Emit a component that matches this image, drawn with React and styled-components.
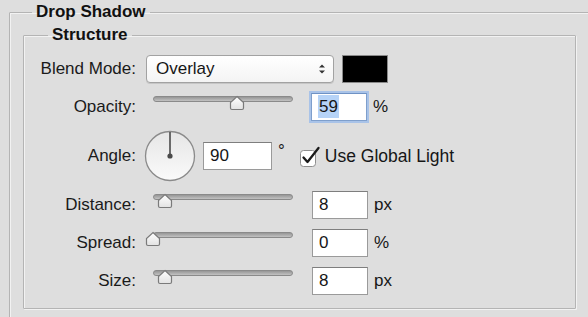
import React from 'react';
import styled, { createGlobalStyle } from 'styled-components';

const GlobalStyle = createGlobalStyle`
  html, body {
    margin: 0;
    padding: 0;
    background: #dedede;
    overflow: hidden;
  }
  body {
    font-family: "Liberation Sans", Arial, sans-serif;
    color: #161616;
  }
`;

const Page = styled.div`
  width: 588px;
  height: 317px;
  overflow: hidden;
  padding: 2px 0 0 9px;
  box-sizing: border-box;
`;

const Group = styled.fieldset`
  margin: ${(p) => (p.$inner ? '3px 0 0 0' : '0')};
  width: ${(p) => (p.$inner ? '553px' : '600px')};
  height: ${(p) => (p.$inner ? 'auto' : '340px')};
  padding: ${(p) => (p.$inner ? '0 0 13px 0' : '0 0 0 13px')};
  box-sizing: border-box;
  border: 1px solid #b4b4b4;
  box-shadow: inset 1px 1px 0 #f2f2f2, 1px 1px 0 #f2f2f2;
  border-radius: 1px;
`;

const Legend = styled.legend`
  margin-inline-start: ${(p) => p.$offset}px;
  padding: 0 4px;
  font-size: 17px;
  line-height: 20px;
  font-weight: bold;
  color: #111;
`;

const Form = styled.div`
  display: grid;
  grid-template-columns: 112px auto;
  column-gap: 10px;
  row-gap: 10px;
  padding-top: 10px;
`;

const Label = styled.div`
  font-size: 17px;
  text-align: right;
  align-self: center;
  color: #1a1a1a;
`;

const Controls = styled.div`
  display: flex;
  align-items: ${(p) => (p.$top ? 'flex-start' : 'center')};
  height: ${(p) => p.$h || 28}px;
`;

const Select = styled.div`
  width: 188px;
  height: 28px;
  box-sizing: border-box;
  border: 1px solid #a2a2a2;
  border-radius: 4px;
  background: linear-gradient(#ffffff, #f4f4f4);
  box-shadow: 0 1px 0 #c6c6c6;
  display: flex;
  align-items: center;
  justify-content: space-between;
  padding: 0 7px 0 9px;
  font-size: 17px;
`;

const Swatch = styled.div`
  width: 46px;
  height: 28px;
  margin-left: 8px;
  box-sizing: border-box;
  background: #000;
  border: 1px solid #8a8a8a;
`;

const SliderWrap = styled.div`
  position: relative;
  width: 140px;
  height: 18px;
  margin: 3px 0 0 7px;
`;

const Track = styled.div`
  height: 6px;
  box-sizing: border-box;
  border: 1px solid #8a8a8a;
  border-radius: 3px;
  background: linear-gradient(#969696, #c2c2c2);
`;

const Thumb = styled.svg`
  position: absolute;
  top: -1px;
  margin-left: -8px;
`;

const Field = styled.div`
  width: ${(p) => p.$w || 56}px;
  height: 28px;
  box-sizing: border-box;
  margin-left: ${(p) => p.$ml || 0}px;
  background: #fff;
  border: 1px solid ${(p) => (p.$focus ? '#7f9fcc' : '#9a9a9a')};
  border-top-color: ${(p) => (p.$focus ? '#6f92c4' : '#7e7e7e')};
  box-shadow: ${(p) => (p.$focus ? '0 0 0 2px #a9c3e8' : 'none')};
  padding: 0 0 0 6px;
  font-size: 17px;
  line-height: 26px;
`;

const Selected = styled.span`
  background: #b6d3f7;
  padding: 2px 1px;
`;

const Unit = styled.span`
  font-size: 17px;
  margin-left: ${(p) => p.$ml || 6}px;
  align-self: ${(p) => (p.$sup ? 'flex-start' : 'center')};
  margin-top: ${(p) => (p.$sup ? '10px' : '0')};
`;

const Dial = styled.svg`
  margin-left: -2px;
`;

const CheckRow = styled.label`
  display: flex;
  align-items: center;
  margin-left: 14px;
  font-size: 17.5px;
  gap: 4px;
`;

function Slider({ pct }) {
  return (
    <SliderWrap>
      <Track />
      <Thumb width="16" height="16" viewBox="0 0 16 16" style={{ left: `${pct}%` }}>
        <defs>
          <linearGradient id="tg" x1="0" y1="0" x2="0" y2="1">
            <stop offset="0" stopColor="#ffffff" />
            <stop offset="1" stopColor="#e2e2e2" />
          </linearGradient>
        </defs>
        <path
          d="M8 1.5 L14.5 7.5 L14.5 13 Q14.5 14.5 13 14.5 L3 14.5 Q1.5 14.5 1.5 13 L1.5 7.5 Z"
          fill="url(#tg)"
          stroke="#7a7a7a"
          strokeWidth="1.2"
        />
      </Thumb>
    </SliderWrap>
  );
}

const sliders = [
  { label: 'Distance:', value: '8', unit: 'px', pct: 8.6 },
  { label: 'Spread:', value: '0', unit: '%', pct: 0 },
  { label: 'Size:', value: '8', unit: 'px', pct: 8.6 },
];

export default function App() {
  return (
    <Page>
      <GlobalStyle />
      <Group>
        <Legend $offset={9}>Drop Shadow</Legend>
        <Group $inner>
          <Legend $offset={24}>Structure</Legend>
          <Form>
            <Label>Blend Mode:</Label>
            <Controls>
              <Select>
                <span>Overlay</span>
                <svg width="8" height="12" viewBox="0 0 8 12">
                  <path d="M1 4.5 L4 1.5 L7 4.5 Z M1 7.5 L4 10.5 L7 7.5 Z" fill="#333" />
                </svg>
              </Select>
              <Swatch />
            </Controls>

            <Label>Opacity:</Label>
            <Controls $top>
              <Slider pct={60} />
              <Field $focus $ml={18}>
                <Selected>59</Selected>
              </Field>
              <Unit>%</Unit>
            </Controls>

            <Label>Angle:</Label>
            <Controls $h={50}>
              <Dial width="52" height="52" viewBox="0 0 52 52">
                <defs>
                  <linearGradient id="dg" x1="0" y1="0" x2="0" y2="1">
                    <stop offset="0" stopColor="#e6e6e6" />
                    <stop offset="1" stopColor="#fafafa" />
                  </linearGradient>
                </defs>
                <circle cx="26" cy="26" r="24.5" fill="url(#dg)" stroke="#8a8a8a" strokeWidth="1.3" />
                <line x1="26" y1="26" x2="26" y2="2" stroke="#4a4a4a" strokeWidth="1.6" />
                <circle cx="26" cy="26" r="2.6" fill="#4a4a4a" />
              </Dial>
              <Field $ml={7} $w={69}>90</Field>
              <Unit $sup $ml={6}>°</Unit>
              <CheckRow>
                <svg width="22" height="22" viewBox="0 0 22 22">
                  <rect x="1.5" y="5.5" width="15" height="16" rx="3" fill="#fff" stroke="#8e8e8e" />
                  <path d="M4.5 12.5 L8.5 17 L19.5 3" fill="none" stroke="#1a1a1a" strokeWidth="2.3" strokeLinecap="round" strokeLinejoin="round" />
                </svg>
                <span>Use Global Light</span>
              </CheckRow>
            </Controls>

            {sliders.map((s) => (
              <React.Fragment key={s.label}>
                <Label>{s.label}</Label>
                <Controls $top>
                  <Slider pct={s.pct} />
                  <Field $ml={19}>{s.value}</Field>
                  <Unit>{s.unit}</Unit>
                </Controls>
              </React.Fragment>
            ))}
          </Form>
        </Group>
      </Group>
    </Page>
  );
}
